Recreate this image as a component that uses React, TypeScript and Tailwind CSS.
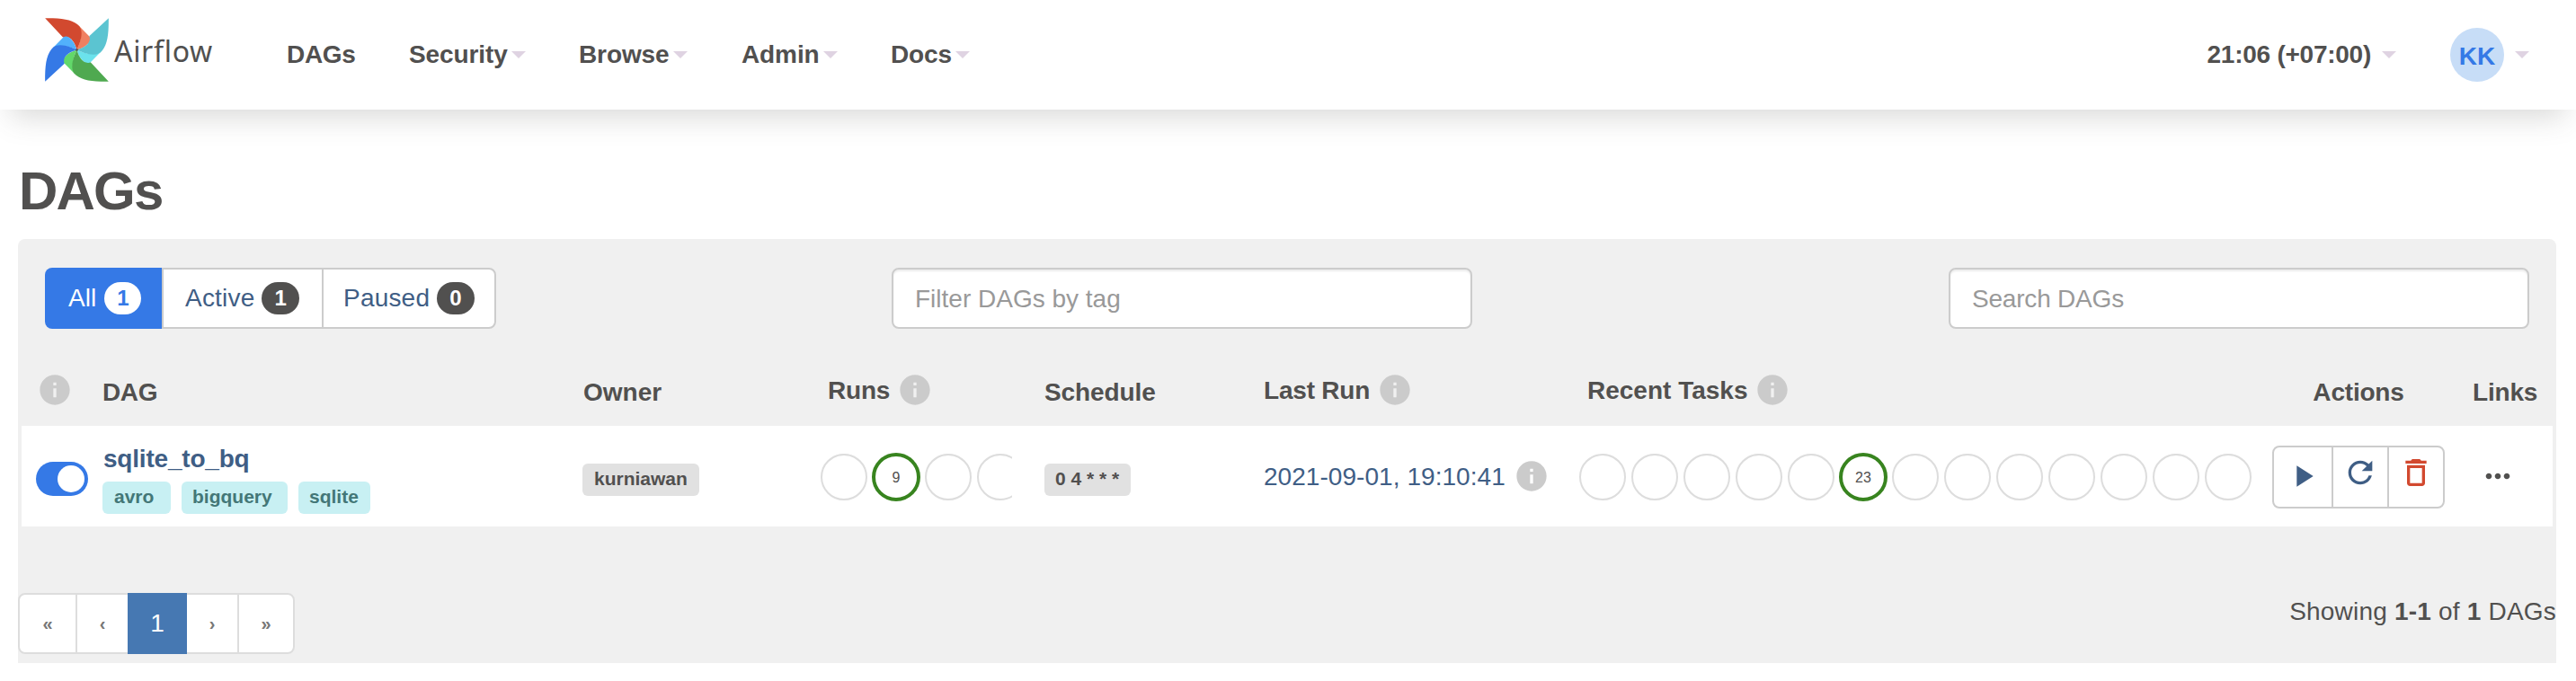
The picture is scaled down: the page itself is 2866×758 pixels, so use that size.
import type { ReactNode } from 'react';
import { MdDeleteOutline, MdInfo, MdMoreHoriz, MdPlayArrow, MdRefresh } from 'react-icons/md';

const BLADES = [
  { angle: 0, dark: '#d2492f', light: '#f08061' },
  { angle: 90, dark: '#5bc4d1', light: '#6be2ec' },
  { angle: 180, dark: '#4fa950', light: '#62d86a' },
  { angle: 270, dark: '#3579e6', light: '#52b1fb' },
];

function Pinwheel() {
  return (
    <svg className="h-[71px] w-[71px] shrink-0" viewBox="31.5 30 212 212">
      {BLADES.map((b) => (
        <g key={b.angle} transform={`rotate(${b.angle} 137.5 136)`}>
          <path
            fill={b.light}
            d="M143 55 L179 91 C186 99 182 108 175 115 C165 126 151 132 137.5 136 C150 110 158 78 143 55 Z"
          />
          <path
            fill={b.dark}
            d="M32 30.500 C85 30 117 34 139 51 C149 59 153 68 153 81 C153 102 144 121 137.500 136 C131 113 119 92 99 93 C96 93 94 94 92 95 Z"
          />
        </g>
      ))}
      <circle cx="137.500" cy="136" r="4" fill="#51504f" />
    </svg>
  );
}

function Caret({ className = '' }: { className?: string }) {
  return (
    <span
      className={`h-0 w-0 border-x-8 border-t-8 border-x-transparent border-t-[#dfd3e2] ${className}`}
    />
  );
}

function NavItem({ label, className }: { label: string; className: string }) {
  return (
    <a className={`flex shrink-0 items-center ${className}`}>
      <span className="tracking-[-0.1px]">{label}</span>
      <Caret className="ml-1" />
    </a>
  );
}

function Filter({ label, count, className }: { label: string; count: number; className: string }) {
  return (
    <button
      className={`flex h-[68px] items-center border-y-2 border-[#ccc] bg-white text-[#3f5e85] ${className}`}
    >
      <span className="tracking-[0.2px]">{label}</span>
      <span className="ml-2 h-9 rounded-full bg-[#51504f] px-[14px] text-2xl leading-[35px] font-bold text-white">
        {count}
      </span>
    </button>
  );
}

function Label({ children, className }: { children: ReactNode; className: string }) {
  return (
    <span
      className={`block h-9 rounded-md text-[21px] leading-[34px] font-bold whitespace-nowrap ${className}`}
    >
      {children}
    </span>
  );
}

function Info({ className = '' }: { className?: string }) {
  return <MdInfo className={`h-10 w-10 shrink-0 text-[#cbcbcb] ${className}`} />;
}

function States({ total, active, value }: { total: number; active: number; value: number }) {
  return (
    <svg className="h-[58px] shrink-0" width={total * 58} height="58">
      {Array.from({ length: total }, (_, i) => (
        <circle
          key={i}
          cx={i * 58 + 27}
          cy="29"
          r="25"
          fill="none"
          stroke={i === active ? '#38841f' : '#ddd'}
          strokeWidth={i === active ? 4 : 2}
        />
      ))}
      <text x={active * 58 + 27} y="35" textAnchor="middle" fontSize="16" fill="#51504f">
        {value}
      </text>
    </svg>
  );
}

const COLUMNS =
  'grid grid-cols-[90px_534px_264px_250px_244px_349px_773px_192px_120px] items-start';

export default function App() {
  return (
    <div className="flex h-[758px] w-[2866px] flex-col overflow-hidden bg-white font-['Liberation_Sans',Arial,sans-serif] text-[28px] leading-10 text-[#51504f]">
      <nav className="flex h-[122px] shrink-0 items-center bg-white pl-[50px] font-bold shadow-[0_20px_30px_-12px_rgba(81,80,78,0.22)]">
        <div className="flex h-[122px] w-[269px] items-start pt-5">
          <Pinwheel />
          <span className="mt-[17px] ml-[6px] font-['Noto_Sans',sans-serif] text-[32px] font-normal tracking-[0.7px]">
            Airflow
          </span>
        </div>
        <a className="w-[136px] tracking-[-0.3px]">DAGs</a>
        <NavItem label="Security" className="w-[189px]" />
        <NavItem label="Browse" className="w-[181px]" />
        <NavItem label="Admin" className="w-[166px]" />
        <NavItem label="Docs" className="" />
        <a className="ml-auto flex items-center">
          <span className="tracking-[-0.25px]">21:06 (+07:00)</span>
          <Caret className="ml-3" />
        </a>
        <a className="mr-[52px] ml-[60px] flex items-center">
          <span className="flex h-[60px] w-[60px] items-center justify-center rounded-full bg-[#c7ddf7] pt-[3px] text-[#3579e6]">
            KK
          </span>
          <Caret className="ml-3" />
        </a>
      </nav>

      <h2 className="mt-[58px] ml-[21px] h-[86px] text-[60px] leading-[66px] font-bold tracking-[-1.8px]">
        DAGs
      </h2>

      <main className="ml-5 flex h-[472px] w-[2824px] shrink-0 flex-col rounded-t-lg bg-[#f0f0f0]">
        <div className="mt-8 mr-[30px] ml-[30px] flex">
          <div className="flex w-[502px]">
            <button className="flex h-[68px] w-[130px] items-center rounded-l-lg bg-[#3579e6] pl-[26px] text-white">
              All
              <span className="ml-[9px] h-9 rounded-full bg-white px-[14px] text-2xl leading-[35px] font-bold text-[#3579e6]">
                1
              </span>
            </button>
            <Filter label="Active" count={1} className="w-[178px] border-l-2 pl-6" />
            <Filter label="Paused" count={0} className="w-[194px] rounded-r-lg border-x-2 pl-[22px]" />
          </div>
          <div className="ml-[440px] h-[68px] w-[646px] rounded-lg border-2 border-[#ccc] bg-white px-6 leading-[65px] text-[#999] shadow-[inset_0_2px_2px_rgba(0,0,0,0.075)]">
            Filter DAGs by tag
          </div>
          <div className="ml-auto h-[68px] w-[646px] rounded-lg border-2 border-[#ccc] bg-white px-6 leading-[65px] tracking-[-0.2px] text-[#999] shadow-[inset_0_2px_2px_rgba(0,0,0,0.075)]">
            Search DAGs
          </div>
        </div>

        <div className={`ml-1 h-[108px] pt-12 font-bold ${COLUMNS}`}>
          <Info className="ml-[17px]" />
          <span className="pt-[3px] tracking-[-0.4px]">DAG</span>
          <span className="pt-[3px] pl-px">Owner</span>
          <span className="flex pl-[9px]">
            <span className="pt-px tracking-[-0.2px]">Runs</span>
            <Info className="ml-2" />
          </span>
          <span className="pt-[3px] tracking-[-0.1px]">Schedule</span>
          <span className="flex">
            <span className="pt-px tracking-[-0.2px]">Last Run</span>
            <Info className="ml-2" />
          </span>
          <span className="flex pl-[11px]">
            <span className="pt-px">Recent Tasks</span>
            <Info className="ml-2" />
          </span>
          <span className="pt-[3px] text-center tracking-[-0.2px]">Actions</span>
          <span className="pt-[3px] pl-[31px] tracking-[-0.2px]">Links</span>
        </div>

        <div className={`ml-1 h-[112px] w-[2816px] bg-white ${COLUMNS}`}>
          <span className="mt-10 ml-4 flex h-[38px] w-[58px] justify-end rounded-full bg-[#3579e6] p-1">
            <span className="h-[30px] w-[30px] rounded-full bg-white" />
          </span>
          <div className="pt-[17px]">
            <a className="block pl-px font-bold tracking-[-0.2px] text-[#3f5e85]">sqlite_to_bq</a>
            <div className="mt-[5px] flex gap-3">
              <Label className="w-[76px] bg-[#c8f0f3] pl-[13px] text-[#437777]">avro</Label>
              <Label className="w-[118px] bg-[#c8f0f3] pl-3 text-[#437777]">bigquery</Label>
              <Label className="w-20 bg-[#c8f0f3] pl-3 text-[#437777]">sqlite</Label>
            </div>
          </div>
          <div className="flex pt-[42px]">
            <Label className="w-[130px] bg-[#e1e1e1] pl-[13px]">kurniawan</Label>
          </div>
          <div className="w-[214px] overflow-hidden pt-7">
            <States total={4} active={1} value={9} />
          </div>
          <div className="flex pt-[42px]">
            <Label className="w-24 bg-[#e1e1e1] pl-3">0 4 * * *</Label>
          </div>
          <div className="flex pt-9 text-[#3f5e85]">
            <span className="w-[268px] pt-px tracking-[0.05px] whitespace-nowrap">
              2021-09-01, 19:10:41
            </span>
            <Info className="ml-[10px]" />
          </div>
          <div className="pt-7 pl-px">
            <States total={13} active={5} value={23} />
          </div>
          <div className="mt-[22px] flex h-[70px] w-[192px] rounded-lg border-2 border-[#ccc] text-[#3f5e85]">
            <span className="w-16 pt-3 pl-3">
              <MdPlayArrow className="h-10 w-10" />
            </span>
            <span className="w-[62px] border-l-2 border-[#ccc] pt-2 pl-[10px]">
              <MdRefresh className="h-10 w-10" />
            </span>
            <span className="w-[62px] border-l-2 border-[#ccc] pt-2 pl-[10px] text-[#d2492f]">
              <MdDeleteOutline className="h-10 w-10" />
            </span>
          </div>
          <MdMoreHoriz className="mt-9 ml-[39px] h-10 w-10" />
        </div>

        <div className="mt-[74px] flex items-start justify-between">
          <div className="flex h-[68px] w-[308px] rounded-lg border-2 border-[#ddd] bg-white text-center text-xl leading-[64px] font-bold text-[#777]">
            <span className="w-[62px]">«</span>
            <span className="w-[58px] border-l-2 border-[#ddd]">‹</span>
            <span className="-my-[2px] h-[68px] w-[66px] bg-[#4678b2] text-[28px] leading-[68px] font-normal text-white">
              1
            </span>
            <span className="w-14">›</span>
            <span className="w-[62px] border-l-2 border-[#ddd]">»</span>
          </div>
          <p className="pt-px tracking-[0.2px]">
            Showing <b>1-1</b> of <b>1</b> DAGs
          </p>
        </div>
      </main>
    </div>
  );
}
